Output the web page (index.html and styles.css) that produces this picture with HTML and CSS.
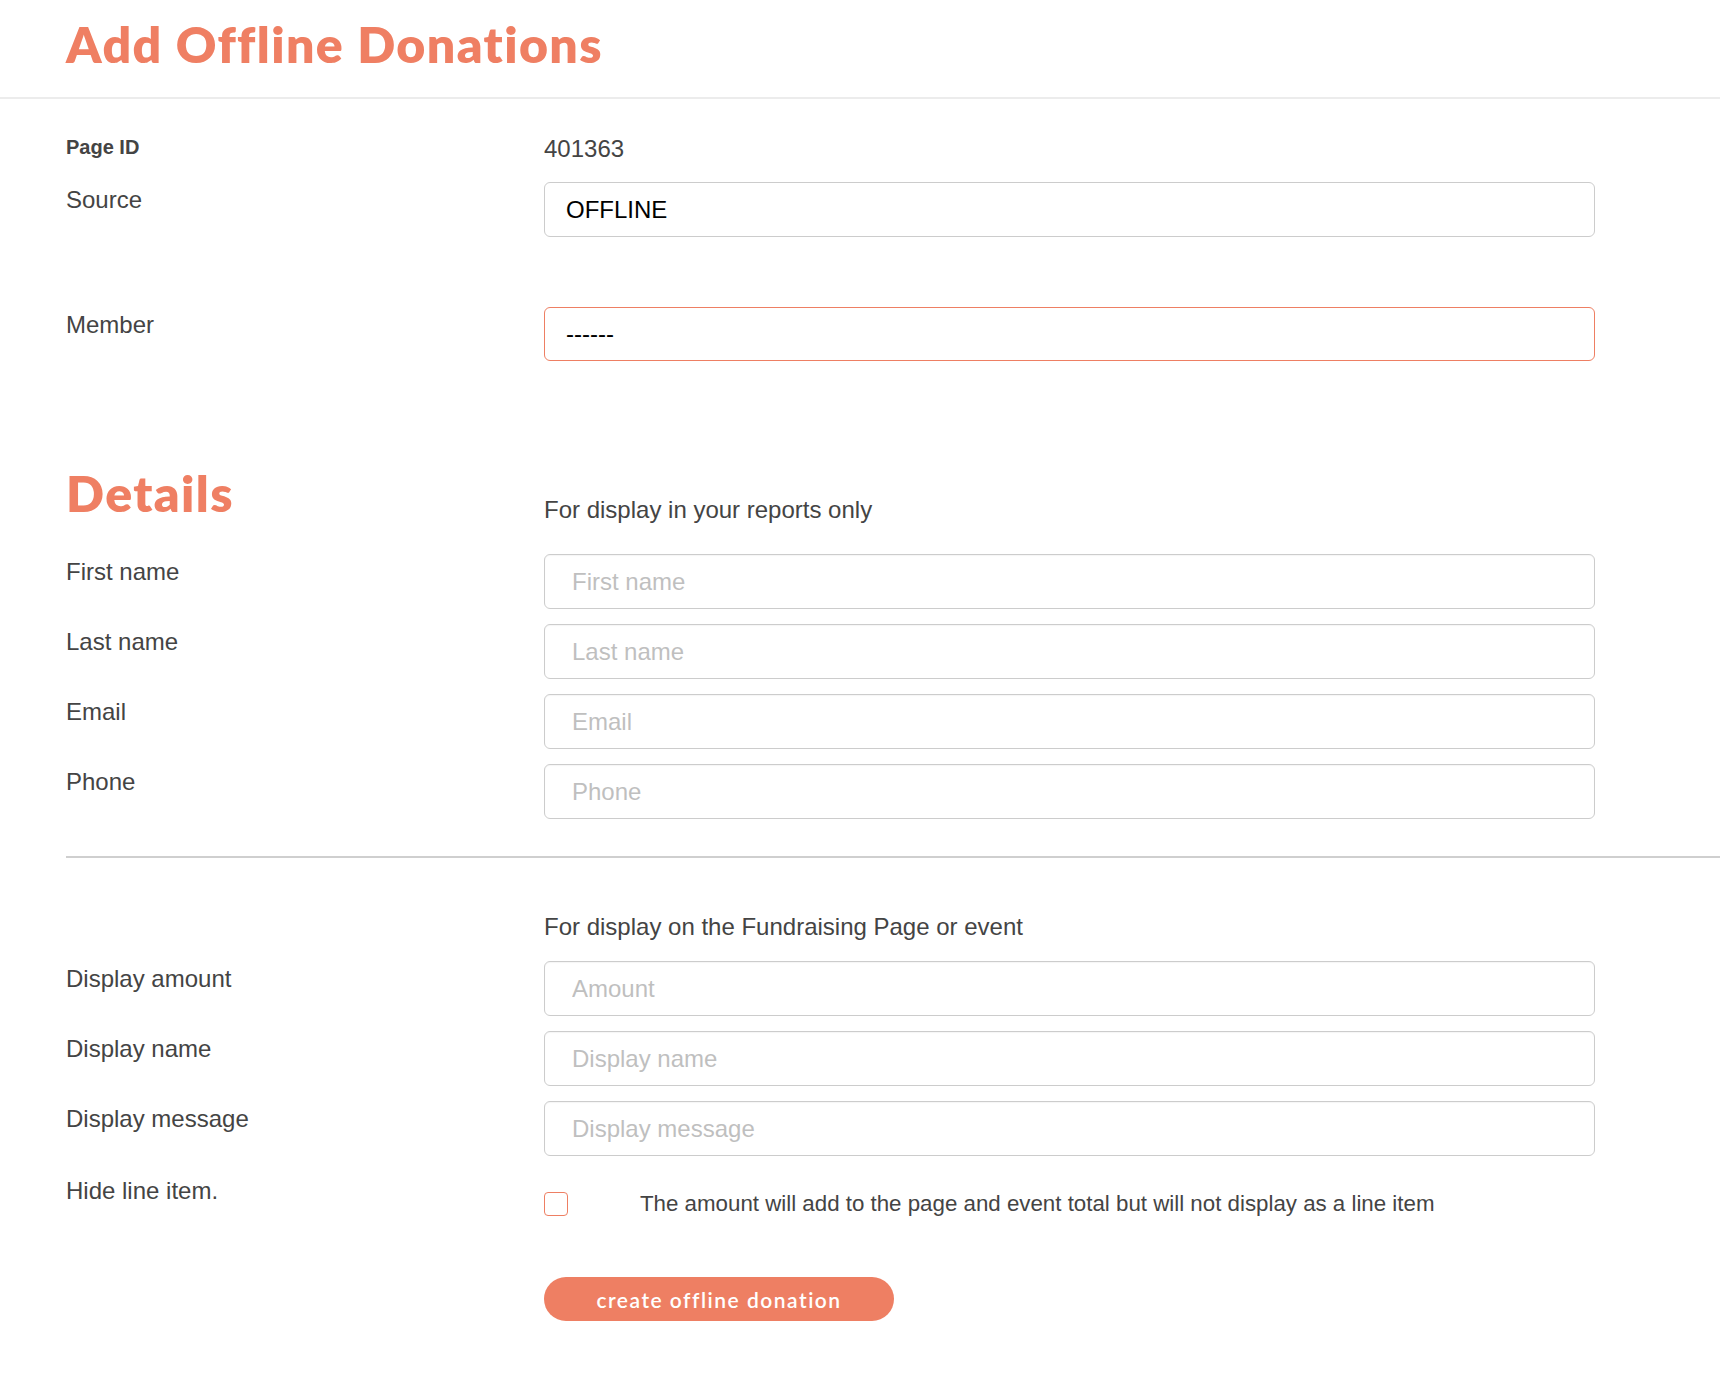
FILE: index.html
```html
<!DOCTYPE html>
<html lang="en">
<head>
<meta charset="utf-8">
<title>Add Offline Donations</title>
<link rel="stylesheet" href="styles.css">
</head>
<body>
<header class="page-header">
  <h1 class="page-title">Add Offline Donations</h1>
</header>
<main class="form">
  <div class="row row-pageid">
    <div class="label label-bold">Page ID</div>
    <div class="value">401363</div>
  </div>
  <div class="row row-source">
    <label class="label">Source</label>
    <div class="select">OFFLINE</div>
  </div>
  <div class="row row-member">
    <label class="label">Member</label>
    <div class="select select-error">------</div>
  </div>

  <div class="row section-head">
    <h2 class="section-title">Details</h2>
    <p class="hint">For display in your reports only</p>
  </div>
  <div class="row row-input row-first">
    <label class="label">First name</label>
    <input class="text-input" type="text" placeholder="First name">
  </div>
  <div class="row row-input">
    <label class="label">Last name</label>
    <input class="text-input" type="text" placeholder="Last name">
  </div>
  <div class="row row-input">
    <label class="label">Email</label>
    <input class="text-input" type="text" placeholder="Email">
  </div>
  <div class="row row-input">
    <label class="label">Phone</label>
    <input class="text-input" type="text" placeholder="Phone">
  </div>

  <hr class="divider">

  <div class="row section-head section-head-plain">
    <div></div>
    <p class="hint hint-plain">For display on the Fundraising Page or event</p>
  </div>
  <div class="row row-input row-first2">
    <label class="label">Display amount</label>
    <input class="text-input" type="text" placeholder="Amount">
  </div>
  <div class="row row-input">
    <label class="label">Display name</label>
    <input class="text-input" type="text" placeholder="Display name">
  </div>
  <div class="row row-input">
    <label class="label">Display message</label>
    <input class="text-input" type="text" placeholder="Display message">
  </div>
  <div class="row row-hide">
    <label class="label">Hide line item.</label>
    <div class="check-field">
      <span class="checkbox"></span>
      <span class="check-text">The amount will add to the page and event total but will not display as a line item</span>
    </div>
  </div>
  <div class="row row-button">
    <div></div>
    <div><button class="btn" type="button">create offline donation</button></div>
  </div>
</main>
</body>
</html>
```
FILE: styles.css
```css
* { box-sizing: border-box; }

html, body {
  margin: 0;
  padding: 0;
  background: #ffffff;
}

body {
  font-family: "Liberation Sans", Arial, Helvetica, sans-serif;
  color: #444444;
}

.page-header {
  padding: 14px 0 23px 66px;
  border-bottom: 2px solid #ececec;
}

.page-title {
  margin: 0;
  font-family: Lato, "Open Sans", sans-serif;
  font-weight: 800;
  font-size: 50px;
  line-height: 60px;
  letter-spacing: 1.4px;
  color: #ef7f63;
}

.form {
  padding: 32px 0 60px 66px;
}

.row {
  display: grid;
  grid-template-columns: 478px 1051px;
  align-items: start;
}

.label {
  display: block;
  font-size: 24px;
  line-height: 32px;
  padding-top: 2px;
  color: #444444;
}

.label-bold {
  font-size: 20px;
  font-weight: 700;
  padding-top: 0;
}

.value {
  font-size: 24px;
  line-height: 32px;
  padding-top: 2px;
  color: #444444;
}

.row-source { margin-top: 17px; }
.row-source .label { padding-top: 2px; }
.row-member { margin-top: 70px; }
.row-member .label { padding-top: 2px; }

.select {
  height: 55px;
  border: 1px solid #cccccc;
  border-radius: 6px;
  padding: 0 21px;
  display: flex;
  align-items: center;
  font-size: 24px;
  color: #000000;
  background: #ffffff;
}

.select-error {
  height: 54px;
  border-color: #ee7f63;
}

.section-head {
  margin-top: 102px;
}

.section-title {
  margin: 0;
  font-family: Lato, "Open Sans", sans-serif;
  font-weight: 800;
  font-size: 50px;
  line-height: 60px;
  letter-spacing: 1.4px;
  color: #ef7f63;
}

.hint {
  margin: 0;
  padding-top: 31px;
  font-size: 24px;
  line-height: 32px;
  color: #444444;
}

.hint-plain { padding-top: 0; }

.section-head-plain { margin-top: 53px; }

.row-input { margin-top: 15px; }
.row-first { margin-top: 28px; }
.row-first2 { margin-top: 18px; }

.text-input {
  display: block;
  width: 100%;
  height: 55px;
  margin: 0;
  border: 1px solid #cccccc;
  border-radius: 6px;
  padding: 0 27px;
  font-family: "Liberation Sans", Arial, Helvetica, sans-serif;
  font-size: 24px;
  color: #444444;
  background: #ffffff;
  outline: none;
  box-shadow: inset 0 1px 1px rgba(0, 0, 0, 0.04);
}

.text-input::placeholder {
  color: #bfbfbf;
  opacity: 1;
}

.divider {
  margin: 37px 0 0 0;
  border: 0;
  border-top: 2px solid #cfcfcf;
  height: 0;
}

.row-hide { margin-top: 17px; }

.check-field {
  display: flex;
  align-items: center;
  padding-top: 18px;
}

.checkbox {
  flex: none;
  width: 24px;
  height: 24px;
  border: 1.5px solid #ee7f63;
  border-radius: 4px;
  background: #ffffff;
}

.check-text {
  margin-left: 72px;
  font-size: 22.3px;
  line-height: 26px;
  color: #444444;
}

.row-button { margin-top: 60px; }

.btn {
  display: block;
  width: 350px;
  height: 44px;
  border: 0;
  border-radius: 22px;
  background: #ee7f63;
  color: #ffffff;
  font-family: Lato, "Open Sans", sans-serif;
  font-weight: 600;
  font-size: 21px;
  letter-spacing: 1.5px;
  padding: 0;
  cursor: pointer;
}
```
